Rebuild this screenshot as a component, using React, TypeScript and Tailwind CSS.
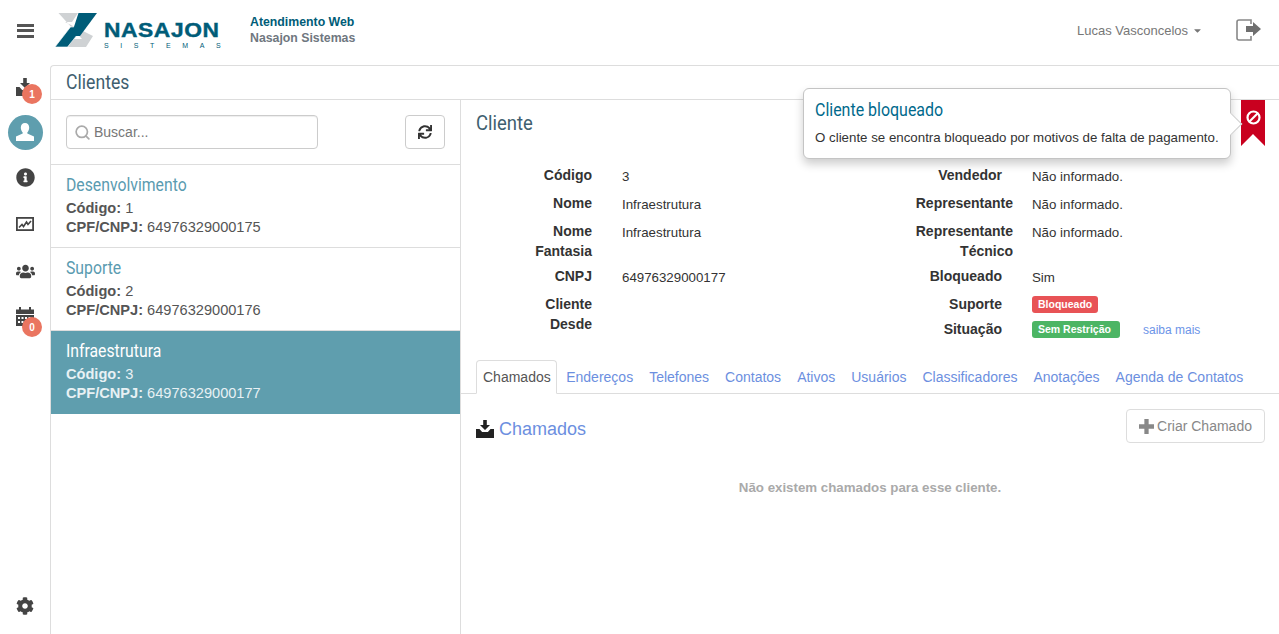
import React from 'react'
import { FaInfoCircle, FaUsers, FaCog, FaSync, FaCaretDown } from 'react-icons/fa'
import { Search } from 'lucide-react'

const CLIENTES = [
  { nome: 'Desenvolvimento', codigo: 1, cnpj: '64976329000175' },
  { nome: 'Suporte', codigo: 2, cnpj: '64976329000176' },
  { nome: 'Infraestrutura', codigo: 3, cnpj: '64976329000177', active: true },
]

const TABS = ['Endereços', 'Telefones', 'Contatos', 'Ativos', 'Usuários', 'Classificadores', 'Anotações', 'Agenda de Contatos']

const InboxIcon: React.FC<{ className?: string }> = ({ className }) => (
  <svg viewBox="0 0 18 18" className={className} fill="currentColor">
    <path d="M7.2 0h3.600v5H14L9 10 4 5h3.200z" />
    <path d="M0 9h3.500l2.600 3h5.800l2.600-3H18v9H0z" />
  </svg>
)

const ChartIcon = () => (
  <svg viewBox="0 0 18 16" className="w-[18px] h-[16px]" fill="none" stroke="#444">
    <rect x="0.9" y="1.9" width="16.2" height="12.2" strokeWidth="1.8" />
    <path d="M3 11.500l3-3 1.500 2 3-4.500 1.500 2.500L15 5" strokeWidth="1.6" />
  </svg>
)

const CalendarIcon = () => (
  <svg viewBox="0 0 18 19" className="w-[18px] h-[19px]" fill="#444">
    <path d="M0 2.500h3V0h2v2.500h8V0h2v2.500h3V7H0z" />
    <path fillRule="evenodd" d="M0 8h18v11H0zM2 10v2h2v-2zm3.500 0v2h2v-2zm3.500 0v2h2v-2zm3.500 0v2h2v-2zM2 14v2h2v-2zm3.500 0v2h2v-2zm3.500 0v2h2v-2z" />
  </svg>
)

const UserIcon = () => (
  <svg viewBox="0 0 18 18" className="w-[18px] h-[18px]" fill="white">
    <path d="M9 0c2.600 0 4.200 1.900 4.200 4.600 0 2-.8 3.800-1.900 4.800v1.200L18 13.500V18H0v-4.500l6.700-2.900V9.400C5.600 8.400 4.800 6.600 4.800 4.600 4.800 1.900 6.400 0 9 0z" />
  </svg>
)

const LogoutIcon = () => (
  <svg viewBox="0 0 25 22" className="w-[25px] h-[22px]">
    <path d="M15 5V1H3a2 2 0 0 0-2 2v16a2 2 0 0 0 2 2h12v-4" fill="none" stroke="#888" strokeWidth="1.6" />
    <path d="M10 7h7V3l8 7-8 7v-4h-7z" fill="#6f6f6f" />
  </svg>
)

const PlusIcon = () => (
  <svg viewBox="0 0 14 14" className="w-[15px] h-[15px] mr-[3px]" fill="#888">
    <path d="M5 0h4v5h5v4H9v5H5V9H0V5h5z" />
  </svg>
)

const BanIcon = () => (
  <svg viewBox="0 0 15 15" className="w-[15px] h-[15px]" fill="none" stroke="white" strokeWidth="2.200">
    <circle cx="7.500" cy="7.500" r="6" />
    <path d="M11.500 3.500l-8 8" />
  </svg>
)

const Logo = () => (
  <div className="flex items-start">
    <svg viewBox="0 0 44 36" className="w-[44px] h-[36px] ml-[5px] mt-[1px] shrink-0">
      <path d="M3.500 1H23l-6 9h-7l28 14-7 11H13l5-8h9z" fill="#cfd2d4" />
      <path d="M0 35h12.500L28.500 15H15.500z" fill="#005c78" stroke="white" strokeWidth="0.6" />
      <path d="M23.500 1H42L25 24h-9z" fill="#005c78" />
    </svg>
    <div className="ml-[5px] mt-[11px] w-[118px] text-[#005c78] font-bold leading-none">
      <div className="text-[20px] tracking-[0.5px] leading-[17px] scale-x-[1.14] origin-left [-webkit-text-stroke:0.4px_#005c78]">NASAJON</div>
      <div className="text-[7px] tracking-[11.6px] font-normal mt-[3px] leading-[8px] whitespace-nowrap">SISTEMAS</div>
    </div>
  </div>
)

const Row: React.FC<{ label: React.ReactNode; value?: React.ReactNode; h: string; labelClass?: string }> = ({ label, value, h, labelClass }) => (
  <div className={`flex ${h}`}>
    <div className="w-[131px] shrink-0 text-right text-[14px] font-bold leading-[20px] pt-[3px] text-[#333]">
      <div className={labelClass}>{label}</div>
    </div>
    <div className="pl-[30px] text-[13.3px] leading-[20px] pt-[5px] text-[#333]">{value}</div>
  </div>
)

const Badge: React.FC<{ color: string; width: string; children: React.ReactNode }> = ({ color, width, children }) => (
  <span className={`block ${color} ${width} h-[17px] rounded-[3px] text-white text-[10.5px] font-bold leading-[17px] pl-[6px]`}>
    {children}
  </span>
)

const App: React.FC = () => {
  return (
    <div className="h-screen flex flex-col overflow-hidden bg-white font-['Liberation_Sans',Arial,sans-serif] text-[#333]">
      <header className="h-[65px] shrink-0 flex items-center">
        <div className="w-[50px] flex flex-col items-center gap-[2.5px] mt-[-4px]">
          <div className="w-[17px] h-[3px] bg-[#555]" />
          <div className="w-[17px] h-[3px] bg-[#555]" />
          <div className="w-[17px] h-[3px] bg-[#555]" />
        </div>
        <div className="mt-[-5px]">
          <Logo />
        </div>
        <div className="ml-[28px] mt-[-5px] text-[12.3px] font-bold leading-[16px]">
          <div className="text-[#005c78]">Atendimento Web</div>
          <div className="text-[#6f7780]">Nasajon Sistemas</div>
        </div>
        <div className="ml-auto flex items-center text-[13px] text-[#777] mt-[-4px]">
          <span>Lucas Vasconcelos</span>
          <FaCaretDown className="ml-[4px] w-[11px] h-[11px]" />
        </div>
        <div className="ml-[33px] mr-[18px] mt-[-5px]">
          <LogoutIcon />
        </div>
      </header>

      <div className="flex-1 flex min-h-0">
        <aside className="w-[50px] shrink-0 flex flex-col items-center text-[#444] pb-[5px]">
          <div className="relative h-[44px] w-[50px] flex items-center justify-center">
            <InboxIcon className="w-[18px] h-[18px]" />
            <span className="absolute left-[22px] top-[19px] w-[20px] h-[20px] rounded-full bg-[#ea7560] text-white text-[10px] font-bold flex items-center justify-center">1</span>
          </div>
          <div className="h-[46px] flex items-center justify-center">
            <div className="w-[35px] h-[35px] rounded-full bg-[#5f9eae] flex items-center justify-center">
              <UserIcon />
            </div>
          </div>
          <div className="h-[44px] flex items-center justify-center">
            <FaInfoCircle className="w-[19px] h-[19px]" />
          </div>
          <div className="h-[49px] flex items-center justify-center">
            <ChartIcon />
          </div>
          <div className="h-[47px] flex items-center justify-center">
            <FaUsers className="w-[19px] h-[19px]" />
          </div>
          <div className="relative h-[43px] w-[50px] flex items-center justify-center">
            <CalendarIcon />
            <span className="absolute left-[22px] top-[22px] w-[20px] h-[20px] rounded-full bg-[#ea7560] text-white text-[10px] font-bold flex items-center justify-center">0</span>
          </div>
          <div className="mt-auto h-[46px] flex items-center justify-center">
            <FaCog className="w-[18px] h-[18px]" />
          </div>
        </aside>

        <main className="flex-1 min-w-0 flex flex-col border-t border-l border-[#ddd] rounded-tl-[4px]">
          <div className="h-[34px] shrink-0 border-b border-[#ddd] pl-[15px] flex items-center">
            <span className="font-['Roboto',sans-serif] text-[20.5px] text-[#3f5f70] scale-x-[0.86] origin-left">Clientes</span>
          </div>

          <div className="flex-1 flex min-h-0">
            <section className="w-[410px] shrink-0 border-r border-[#ddd]">
              <div className="h-[65px] border-b border-[#ddd] pl-[15px] pr-[15px] flex items-center justify-between">
                <div className="w-[252px] h-[34px] border border-[#ccc] rounded-[4px] flex items-center pl-[7px] text-[14px] text-[#777] shadow-[inset_0_1px_1px_rgba(0,0,0,0.07)]">
                  <Search className="w-[17px] h-[17px] text-[#aaa] mr-[3px]" strokeWidth={2.4} />
                  <span>Buscar...</span>
                </div>
                <div className="w-[40px] h-[34px] border border-[#ccc] rounded-[4px] flex items-center justify-center">
                  <FaSync className="w-[14px] h-[14px] text-[#333]" />
                </div>
              </div>
              {CLIENTES.map(c => (
                <div
                  key={c.codigo}
                  className={`h-[83px] pl-[15px] pt-[8px] ${c.active ? 'bg-[#5f9eae] text-[#e8f1f4]' : 'border-b border-[#ddd] text-[#555]'}`}
                >
                  <div className={`font-['Roboto',sans-serif] text-[19px] leading-[24px] scale-x-[0.83] origin-left ${c.active ? 'text-white' : 'text-[#5a9bb0]'}`}>{c.nome}</div>
                  <div className="text-[14.6px] leading-[19px] mt-[2px]"><b>Código:</b> {c.codigo}</div>
                  <div className="text-[14.6px] leading-[19px]"><b>CPF/CNPJ:</b> {c.cnpj}</div>
                </div>
              ))}
            </section>

            <section className="relative flex-1 min-w-0 px-[15px]">
              <div className="font-['Roboto',sans-serif] text-[21px] leading-[24px] mt-[11px] text-[#3f5f70] scale-x-[0.88] origin-left">Cliente</div>

              <div className="flex mt-[27px] h-[198px]">
                <div className="w-[410px] shrink-0 ml-[-15px]">
                  <Row h="h-[28px]" label="Código" value="3" />
                  <Row h="h-[28px]" label="Nome" value="Infraestrutura" />
                  <Row h="h-[45px]" label={<>Nome<br />Fantasia</>} value="Infraestrutura" />
                  <Row h="h-[28px]" label="CNPJ" value="64976329000177" />
                  <Row h="h-[45px]" label={<>Cliente<br />Desde</>} />
                </div>
                <div className="flex-1">
                  <Row h="h-[28px]" label="Vendedor" value="Não informado." />
                  <Row h="h-[28px]" label="Representante" labelClass="mr-[-11px]" value="Não informado." />
                  <Row h="h-[45px]" label={<>Representante<br />Técnico</>} labelClass="mr-[-11px]" value="Não informado." />
                  <Row h="h-[28px]" label="Bloqueado" value="Sim" />
                  <Row h="h-[25px]" label="Suporte" value={<Badge color="bg-[#e85356]" width="w-[66px]">Bloqueado</Badge>} />
                  <Row h="h-[25px]" label="Situação" value={
                    <span className="flex items-start">
                      <Badge color="bg-[#4cb564]" width="w-[88px]">Sem Restrição</Badge>
                      <span className="ml-[23px] mt-[-1px] text-[12px] text-[#6c94e8]">saiba mais</span>
                    </span>
                  } />
                </div>
              </div>

              <div className="flex items-end h-[34px] mx-[-15px] pl-[15px] border-b border-[#ddd] text-[14px] text-[#6c8fe0]">
                <div className="h-[34px] pl-[6px] pr-[5px] mr-[2.5px] mb-[-1px] border border-[#ddd] border-b-white rounded-t-[4px] text-[#555] bg-white leading-[32px]">Chamados</div>
                {TABS.map(t => (
                  <div key={t} className="h-[33px] px-[7px] mr-[2px] leading-[34px]">{t}</div>
                ))}
              </div>

              <div className="flex items-center justify-between mt-[15px] h-[34px] mr-[-1px]">
                <div className="flex items-center text-[18px] text-[#6c8fe0] mt-[6px]">
                  <InboxIcon className="w-[18px] h-[18px] text-[#222] mr-[5px]" />
                  <span>Chamados</span>
                </div>
                <div className="w-[139px] h-[34px] border border-[#ddd] rounded-[4px] flex items-center justify-center text-[14px] text-[#888]">
                  <PlusIcon />
                  <span>Criar Chamado</span>
                </div>
              </div>

              <div className="mt-[35px] text-center text-[13.3px] font-bold leading-[20px] text-[#aaa]">Não existem chamados para esse cliente.</div>

              <div className="absolute left-[780px] top-0 w-[24px] h-[46px] bg-[#c9001f] flex justify-center pt-[10px] [clip-path:polygon(0_0,100%_0,100%_100%,50%_74%,0_100%)]">
                <BanIcon />
              </div>
              <div className="absolute left-[342px] top-[-12px] w-[428px] h-[71px] bg-white border border-[#c4c4c4] rounded-[6px] shadow-[0_5px_10px_rgba(0,0,0,0.2)] pl-[11px] pt-[9px]">
                <div className="font-['Roboto',sans-serif] text-[19px] leading-[24px] text-[#00698c] scale-x-[0.84] origin-left">Cliente bloqueado</div>
                <div className="text-[13.3px] leading-[20px] mt-[6px] text-[#333] whitespace-nowrap">O cliente se encontra bloqueado por motivos de falta de pagamento.</div>
                <div className="absolute right-[-8.5px] top-[27px] w-[16px] h-[16px] bg-white border-t border-r border-[#d0d0d0] rotate-45" />
              </div>
            </section>
          </div>
        </main>
      </div>
    </div>
  )
}

export default App
